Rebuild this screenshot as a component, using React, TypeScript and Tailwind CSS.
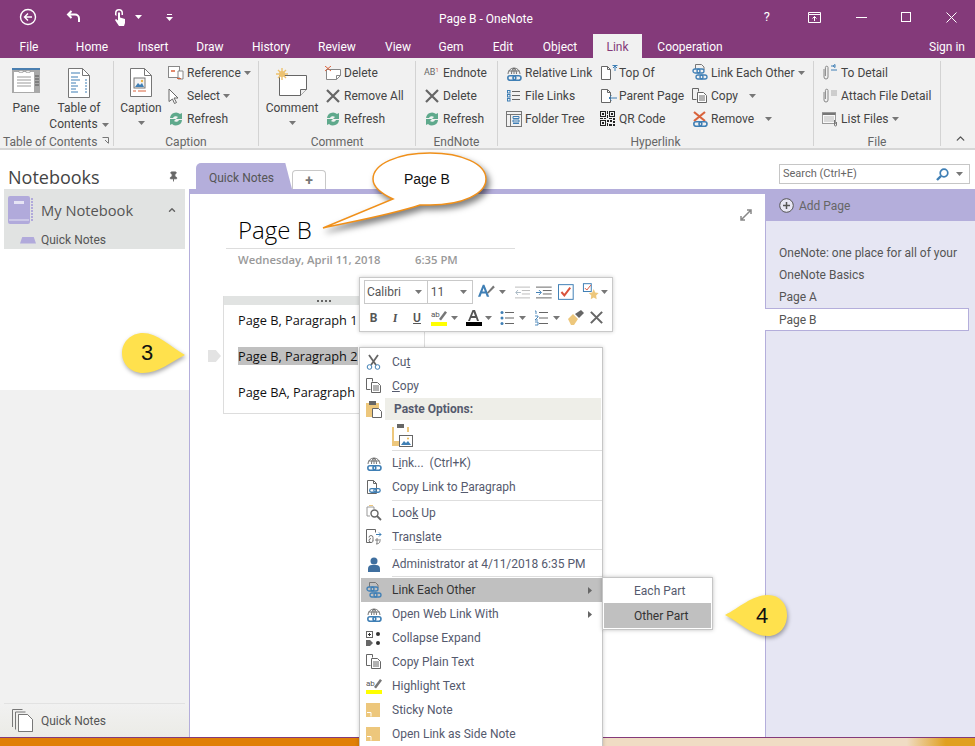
import React from 'react';
import { ChevronUp, Pin } from 'lucide-react';

const purple = '#843a7a';
const openSans = { fontFamily: '"Open Sans", sans-serif' };
const arial = { fontFamily: '"Liberation Sans", sans-serif' };

// ---------- small ribbon icons ----------
const Caret = ({ className = '' }: { className?: string }) => (
  <svg width="7" height="4" viewBox="0 0 7 4" className={className}>
    <path d="M0 0h7L3.500 4z" fill="#777" />
  </svg>
);

const RefreshIcon = () => (
  <svg width="16" height="16" viewBox="0 0 16 16">
    <path d="M2 7a6 6 0 0 1 10-4l2-1v6H8l2-2a3.200 3.200 0 0 0-5 1z" fill="#5fa98c" />
    <path d="M14 9a6 6 0 0 1-10 4l-2 1V8h6l-2 2a3.200 3.200 0 0 0 5-1z" fill="#5fa98c" />
  </svg>
);

const XIcon = ({ size = 16 }: { size?: number }) => (
  <svg width={size} height={size} viewBox="0 0 16 16">
    <path d="M2 2l12 12M14 2L2 14" stroke="#666" strokeWidth="2.200" />
  </svg>
);

const ChainBlue = ({ x = 0, y = 0 }: { x?: number; y?: number }) => (
  <g transform={`translate(${x} ${y})`} fill="none" stroke="#3f7fb5" strokeWidth="1.600">
    <rect x="0.800" y="0.800" width="8" height="4.500" rx="2.200" />
    <rect x="6" y="0.800" width="8" height="4.500" rx="2.200" />
  </g>
);

const GlobeLink = () => (
  <svg width="16" height="16" viewBox="0 0 16 16">
    <g fill="none" stroke="#666" strokeWidth="0.900">
      <path d="M2 9a6 6 0 1 1 12 0" />
      <path d="M8 3v6M5.500 9c0-3 1-5 2.500-6 1.500 1 2.500 3 2.500 6M2.500 6h11" />
    </g>
    <ChainBlue x={1} y={10} />
  </svg>
);

const FileLinks = () => (
  <svg width="16" height="16" viewBox="0 0 16 16" fill="none" stroke="#666">
    <rect x="1.500" y="2.500" width="2.500" height="2.500" stroke="#3f7fb5" />
    <rect x="1.500" y="6.500" width="2.500" height="2.500" stroke="#3f7fb5" />
    <rect x="1.500" y="10.500" width="2.500" height="2.500" stroke="#3f7fb5" />
    <path d="M6 3.500h8M6 7.500h8M6 11.500h8" />
  </svg>
);

const FolderTree = () => (
  <svg width="16" height="16" viewBox="0 0 16 16" fill="none">
    <rect x="0.500" y="0.500" width="15" height="15" stroke="#777" />
    <path d="M0.500 3.500h15M4.500 3.500v12" stroke="#777" />
    <path d="M7 5.500h6v2H7zM7 9h6v2H7zM7 12.500h6" stroke="#3f7fb5" />
  </svg>
);

const PageOutline = ({ children }: { children?: React.ReactNode }) => (
  <svg width="18" height="16" viewBox="0 0 18 16" fill="none">
    <path d="M1.500 1.500h6l3 3v10h-9z" stroke="#666" fill="#fff" />
    <path d="M7.500 1.500v3h3" stroke="#666" />
    {children}
  </svg>
);

const Qr = () => (
  <svg width="15" height="15" viewBox="0 0 15 15" fill="#222">
    <path d="M0 0h6v6H0zM1 1v4h4V1zM2 2h2v2H2zM9 0h6v6H9zM10 1v4h4V1zM11 2h2v2h-2zM0 9h6v6H0zM1 10v4h4v-4zM2 11h2v2H2z" fillRule="evenodd" />
    <path d="M7 0h1v3H7zM7 4h1v3H7zM0 7h3v1H0zM4 7h2v1H4zM9 7h3v1H9zM13 7h2v2h-2zM7 9h2v2H7zM10 9h2v2h-2zM13 10h2v2h-2zM7 12h1v3H7zM9 13h3v2H9zM13 13h2v2h-2z" />
  </svg>
);

const LinkEach = () => (
  <svg width="16" height="17" viewBox="0 0 16 17" fill="none">
    <path d="M3.500 5V.5h6l2.500 2.500v3" stroke="#777" />
    <g stroke="#3f7fb5" strokeWidth="1.300">
      <rect x="1" y="5" width="7" height="4" rx="2" />
      <rect x="5" y="5" width="7" height="4" rx="2" />
      <rect x="4" y="11" width="7" height="4" rx="2" />
      <rect x="8" y="11" width="7" height="4" rx="2" />
    </g>
  </svg>
);

const CopyIcon = () => (
  <svg width="16" height="16" viewBox="0 0 16 16" fill="none" stroke="#666">
    <path d="M.5.500h6v3M.5.500v11h4" />
    <path d="M5.500 4.500h6l3 3v7h-9zM7 8h6M7 10h6M7 12h6" fill="#fff" />
  </svg>
);

const RemoveIcon = () => (
  <svg width="16" height="16" viewBox="0 0 16 16">
    <path d="M2 1l11 9M13 1L2 10" stroke="#d9633c" strokeWidth="2.200" />
    <ChainBlue x={1} y={10} />
  </svg>
);

const Clip = ({ children }: { children?: React.ReactNode }) => (
  <svg width="17" height="17" viewBox="0 0 17 17" fill="none">
    <path d="M2 5v8a2 2 0 0 0 4 0V3.500a1.300 1.300 0 0 0-2.600 0V12" stroke="#888" />
    {children}
  </svg>
);

const ListFiles = () => (
  <svg width="16" height="16" viewBox="0 0 16 16" fill="none">
    <rect x="0.500" y="1.500" width="13" height="11" stroke="#999" fill="#f8f8f8" />
    <path d="M0.500 3h13" stroke="#777" strokeWidth="2" />
    <path d="M2 6h10M2 8h10M2 10h10" stroke="#bbb" />
    <path d="M12.500 9v5a1 1 0 0 0 2 0v-3" stroke="#777" />
  </svg>
);

const Pane = () => (
  <svg width="28" height="26" viewBox="0 0 28 26">
    <rect width="28" height="25" fill="#a9a9a9" />
    <rect width="28" height="2" fill="#4a7fb0" />
    <rect x="2" y="4" width="20" height="20" fill="#fff" />
    <path d="M7 2.500h4v2H7zM14 2.500h4v2h-4z" fill="#eee" stroke="#888" strokeWidth="0.500" />
    <path d="M5 9h14M5 12h14M5 15h14M5 18h14" stroke="#999" />
    <path d="M23 8h4M23 11h4M23 14h4M23 17h4" stroke="#555" />
  </svg>
);

const Toc = () => (
  <svg width="22" height="30" viewBox="0 0 22 30" fill="none">
    <path d="M.5.500h14l7 7v22H.5z" stroke="#777" fill="#fff" />
    <path d="M14.500.500v7h7" stroke="#777" />
    <path d="M3 5h9M3 9h7M3 12h9M3 15h5M3 18h7M3 21h5M3 24h7" stroke="#3f7fb5" strokeWidth="1.200" />
    <path d="M17 12h2M17 15h2M17 18h2M17 21h2M17 24h2" stroke="#3f7fb5" />
  </svg>
);

const CaptionDoc = () => (
  <svg width="22" height="29" viewBox="0 0 22 29" fill="none">
    <path d="M.5.500h14l7 7v21H.5z" stroke="#777" fill="#fff" />
    <path d="M14.500.500v7h7" stroke="#777" />
    <rect x="4" y="10" width="11" height="10" stroke="#777" fill="#f4f4f4" />
    <path d="M5 19l3-4 2 2 2-2 2 4z" fill="#3f7fb5" />
    <circle cx="12" cy="13" r="1.200" fill="#e9b54a" />
    <path d="M3 23h3M8 23h8" stroke="#d9633c" />
  </svg>
);

const Reference = () => (
  <svg width="16" height="14" viewBox="0 0 16 14" fill="none">
    <rect x="0.500" y="0.500" width="11" height="11" stroke="#888" fill="#fff" />
    <path d="M3 5h4" stroke="#d9633c" strokeWidth="1.500" />
    <path d="M10 5h5v8h-5zM9 12h3" stroke="#888" fill="#fff" />
    <path d="M9 12.500h4" stroke="#d9633c" />
  </svg>
);

const Cursor = () => (
  <svg width="12" height="16" viewBox="0 0 12 16" fill="#fff" stroke="#666">
    <path d="M1 1l9 9H6l2.500 4.500-2 1L4.500 11 1 13.500z" />
  </svg>
);

const Comment = () => (
  <svg width="32" height="28" viewBox="0 0 32 28">
    <path d="M3.500 7.500h27v14l-6 6h-21z" fill="#fff" stroke="#666" />
    <path d="M24.500 27.500v-6h6" fill="#eee" stroke="#666" />
    <g stroke="#edc26f" strokeWidth="1.400">
      <path d="M6 0v12M0 6h12M2 2l8 8M10 2l-8 8" />
    </g>
    <circle cx="6" cy="6" r="3" fill="#edc26f" />
  </svg>
);

const DeleteNote = () => (
  <svg width="16" height="14" viewBox="0 0 16 14" fill="none">
    <path d="M1.500 3.500h14v6l-4 4h-10z" stroke="#888" fill="#fff" />
    <path d="M11.500 13.500v-4h4" stroke="#888" />
    <path d="M0 0l6 5M6 0L0 5" stroke="#d9633c" />
  </svg>
);

// ---------- ribbon layout ----------
const RibbonRow = ({ icon, label, caret, caretGap }: { icon: React.ReactNode; label: string; caret?: boolean; caretGap?: boolean }) => (
  <div className="h-[23px] flex items-center whitespace-nowrap">
    <span className="w-[19px] flex justify-start shrink-0">{icon}</span>
    <span>{label}</span>
    {caret && <Caret className={caretGap ? 'ml-[11px]' : 'ml-[3px]'} />}
  </div>
);

const Group = ({ w, label, children, launcher }: { w: number; label: string; children: React.ReactNode; launcher?: boolean }) => (
  <div style={{ width: w }} className="shrink-0 h-[85px] flex flex-col relative border-r border-[#d3d3d3] mt-[3px]">
    <div className="h-[74px] shrink-0 flex">{children}</div>
    <div className={`text-[12px] leading-[14px] text-[#666] whitespace-nowrap ${launcher ? 'pl-[3px]' : 'text-center'}`}>{label}</div>
    {launcher && (
      <svg width="7" height="7" viewBox="0 0 7 7" className="absolute right-[4px] bottom-[2px]" fill="none" stroke="#777">
        <path d="M.5.500h6v6M3 3l3 3" />
      </svg>
    )}
  </div>
);

const BigButton = ({ w, icon, lines, caret }: { w: number; icon: React.ReactNode; lines: React.ReactNode; caret?: boolean }) => (
  <div style={{ width: w }} className="flex flex-col items-center shrink-0">
    <div className="h-[37px] pt-[7px] flex items-start justify-center">{icon}</div>
    <div className="text-center leading-[16px] mt-[2px] whitespace-nowrap">{lines}</div>
    {caret && <Caret className="mt-[5px]" />}
  </div>
);

const RibbonCol = ({ children, className = '' }: { children: React.ReactNode; className?: string }) => (
  <div className={`flex flex-col ${className}`}>{children}</div>
);

// ---------- menu ----------
const MenuRow = ({ icon, label, active, arrow }: { icon?: React.ReactNode; label: React.ReactNode; active?: boolean; arrow?: boolean }) => (
  <div className={`h-[24px] flex items-center whitespace-nowrap pr-[10px] ${active ? 'bg-[#c0c0c0] text-[#333]' : 'text-[#555a6e]'}`}>
    <span className="w-[31px] pl-[5px] flex justify-start shrink-0">{icon}</span>
    <span className="flex-1">{label}</span>
    {arrow && (
      <svg width="4" height="7" viewBox="0 0 4 7">
        <path d="M0 0l4 3.500L0 7z" fill="#666" />
      </svg>
    )}
  </div>
);

const MenuSep = ({ className = '' }: { className?: string }) => <div className={`ml-[31px] h-px bg-[#dedede] ${className}`} />;

const NoteSticky = () => (
  <svg width="15" height="15" viewBox="0 0 15 15">
    <path d="M0 0h14v14H5l-5-0z" fill="#edc77c" />
    <path d="M1 9.500h4v4" fill="none" stroke="#fff" />
  </svg>
);

const Underlined = ({ a, u, b }: { a: string; u: string; b: string }) => (
  <>
    {a}
    <span className="underline">{u}</span>
    {b}
  </>
);

const TitleTab = ({ children, w }: { children: string; w: number }) => (
  <div style={{ width: w }} className="text-center text-white shrink-0">{children}</div>
);

export default function App() {
  return (
    <div className="w-[975px] h-[746px] relative overflow-hidden text-[12px] text-[#444] bg-[#f1f1f1] flex flex-col" style={{ fontFamily: 'Roboto, "Open Sans", sans-serif' }}>
      {/* Title bar */}
      <header className="h-[58px] shrink-0 flex flex-col" style={{ background: purple }}>
        <div className="h-[34px] flex items-center relative text-white">
          <div className="flex items-center pl-[19px]">
            <svg width="18" height="18" viewBox="0 0 18 18" fill="none" stroke="#fff" strokeWidth="1.400">
              <circle cx="9" cy="9" r="7.500" />
              <path d="M13 9H5.500M9 5.500L5.500 9 9 12.500" />
            </svg>
            <svg width="16" height="14" viewBox="0 0 16 14" fill="none" stroke="#fff" strokeWidth="2" className="ml-[29px]">
              <path d="M5.500 1L2 4.500 5.500 8M2 4.500h7a4 4 0 0 1 4 4V12" />
            </svg>
            <svg width="14" height="17" viewBox="0 0 14 17" fill="#fff" className="ml-[32px]">
              <path d="M5 0a4 4 0 0 1 4 4v2h-1.500V4a2.500 2.500 0 0 0-5 0v3L1 6V4a4 4 0 0 1 4-4z" />
              <path d="M4 3.500h2v5l5 1.500v4l-1 3H5L1 11l1-1 2 1.500z" />
            </svg>
            <Caret className="ml-[7px] brightness-[5]" />
            <svg width="7" height="7" viewBox="0 0 7 7" fill="#fff" className="ml-[24px]">
              <path d="M1 0h5v1H1zM0 3h7L3.500 7z" />
            </svg>
          </div>
          <div className="absolute left-[439px] top-[11px] text-[12px] leading-[16px] whitespace-nowrap">Page B - OneNote</div>
          <div className="absolute right-0 top-0 h-[34px] flex items-center">
            <span className="text-[13px] mr-[38px]">?</span>
            <svg width="13" height="11" viewBox="0 0 13 11" fill="none" stroke="#fff" className="mr-[35px]">
              <path d="M.5 2.500v8h12v-10H.5zM.5 2.500h12M6.500 9V4.500M4.500 6.500l2-2 2 2" />
            </svg>
            <span className="w-[11px] h-px bg-white mr-[34px]" />
            <span className="w-[10px] h-[10px] border border-white mr-[35px]" />
            <svg width="11" height="11" viewBox="0 0 11 11" stroke="#fff" className="mr-[18px]">
              <path d="M.5.500l10 10M10.500.500l-10 10" />
            </svg>
          </div>
        </div>
        <div className="h-[24px] flex items-end relative leading-[21px]">
          <TitleTab w={58}>File</TitleTab>
          <TitleTab w={68}>Home</TitleTab>
          <TitleTab w={54}>Insert</TitleTab>
          <TitleTab w={60}>Draw</TitleTab>
          <TitleTab w={62}>History</TitleTab>
          <TitleTab w={70}>Review</TitleTab>
          <TitleTab w={52}>View</TitleTab>
          <TitleTab w={54}>Gem</TitleTab>
          <TitleTab w={50}>Edit</TitleTab>
          <TitleTab w={64}>Object</TitleTab>
          <div className="w-[49px] h-[24px] pt-[3px] text-center bg-[#f1f1f1] text-[#843a7a] shrink-0 ml-[1px]">Link</div>
          <TitleTab w={96}>Cooperation</TitleTab>
          <div className="absolute right-[10px] bottom-0 text-white">Sign in</div>
        </div>
      </header>

      {/* Ribbon */}
      <div className="h-[92px] shrink-0 flex items-start border-b-2 border-[#d6d6d6] relative pl-0">
        <Group w={114} label="Table of Contents" launcher>
          <div className="flex pl-[2px]">
            <BigButton w={48} icon={<Pane />} lines="Pane" />
            <BigButton w={58} icon={<Toc />} lines={<>Table of<br />Contents <Caret className="inline ml-[1px]" /></>} />
          </div>
        </Group>
        <Group w={145} label="Caption">
          <BigButton w={54} icon={<CaptionDoc />} lines="Caption" caret />
          <RibbonCol>
            <RibbonRow icon={<Reference />} label="Reference" caret />
            <RibbonRow icon={<Cursor />} label="Select" caret />
            <RibbonRow icon={<RefreshIcon />} label="Refresh" />
          </RibbonCol>
        </Group>
        <Group w={157} label="Comment">
          <BigButton w={66} icon={<Comment />} lines="Comment" caret />
          <RibbonCol>
            <RibbonRow icon={<DeleteNote />} label="Delete" />
            <RibbonRow icon={<XIcon />} label="Remove All" />
            <RibbonRow icon={<RefreshIcon />} label="Refresh" />
          </RibbonCol>
        </Group>
        <Group w={82} label="EndNote">
          <RibbonCol className="pl-[8px]">
            <RibbonRow icon={<span className="text-[9px] text-[#666] leading-none">AB<sup className="text-[#d9633c] text-[6px]">1</sup></span>} label="Endnote" />
            <RibbonRow icon={<XIcon />} label="Delete" />
            <RibbonRow icon={<RefreshIcon />} label="Refresh" />
          </RibbonCol>
        </Group>
        <Group w={316} label="Hyperlink">
          <RibbonCol className="pl-[8px] w-[102px]">
            <RibbonRow icon={<GlobeLink />} label="Relative Link" />
            <RibbonRow icon={<FileLinks />} label="File Links" />
            <RibbonRow icon={<FolderTree />} label="Folder Tree" />
          </RibbonCol>
          <RibbonCol className="w-[92px]">
            <RibbonRow icon={<PageOutline><path d="M15 6V1M13 3l2-2 2 2M12.500.500h5" stroke="#3f7fb5" /></PageOutline>} label="Top Of" />
            <RibbonRow icon={<PageOutline><path d="M17 10h-8M11.500 7.500L9 10l2.500 2.500" stroke="#3f7fb5" /></PageOutline>} label="Parent Page" />
            <RibbonRow icon={<Qr />} label="QR Code" />
          </RibbonCol>
          <RibbonCol>
            <RibbonRow icon={<LinkEach />} label="Link Each Other" caret />
            <RibbonRow icon={<CopyIcon />} label="Copy" caret caretGap />
            <RibbonRow icon={<RemoveIcon />} label="Remove" caret caretGap />
          </RibbonCol>
        </Group>
        <Group w={127} label="File">
          <RibbonCol className="pl-[8px]">
            <RibbonRow icon={<Clip><path d="M9 2h2M11 2l2-1.500v3zM9 6h6" stroke="#3f7fb5" /></Clip>} label="To Detail" />
            <RibbonRow icon={<Clip><path d="M9 4h6M9 6h6M9 8h6" stroke="#aaa" /></Clip>} label="Attach File Detail" />
            <RibbonRow icon={<ListFiles />} label="List Files" caret />
          </RibbonCol>
        </Group>
        <ChevronUp size={13} strokeWidth={2.500} className="absolute left-[954px] bottom-[3px] text-[#555]" />
      </div>

      {/* Main area */}
      <main className="flex-1 flex min-h-0 bg-white">
        <aside className="w-[189px] shrink-0 flex flex-col bg-[#f1f1f1]">
          <div className="h-[240px] bg-white flex flex-col">
            <div className="h-[39px] flex items-end justify-between pl-[8px] pr-[10px]">
              <span className="text-[18px] leading-[24px] text-[#444]" style={openSans}>Notebooks</span>
              <Pin size={11} fill="#666" className="text-[#666] mb-[7px]" />
            </div>
            <div className="ml-[4px] mr-[4px] h-[60px] bg-[#e1e3e2] relative">
              <div className="flex items-center h-[42px] pl-[4px]">
                <svg width="25" height="29" viewBox="0 0 25 29">
                  <rect width="22" height="28" rx="2" fill="#b1aadb" />
                  <rect x="6" y="5" width="10" height="3" fill="#e6e4f4" />
                  <path d="M1 24h20" stroke="#e6e4f4" />
                  <path d="M24 2v24" stroke="#b1aadb" strokeWidth="2" strokeDasharray="2 1" />
                </svg>
                <span className="ml-[8px] text-[14.700px] text-[#555]" style={openSans}>My Notebook</span>
              </div>
              <ChevronUp size={10} strokeWidth={3.500} className="absolute right-[8px] top-[16px] text-[#666]" />
              <div className="flex items-center pl-[16px] h-[18px]">
                <span className="w-[16px] h-[7px] bg-[#b1aadb] [clip-path:polygon(15%_0,85%_0,100%_100%,0_100%)]" />
                <span className="ml-[5px] text-[#555]">Quick Notes</span>
              </div>
            </div>
          </div>
          <div className="flex-1" />
          <div className="mx-[4px] border-t border-[#e2e2e2]" />
          <div className="h-[33px] flex items-center pl-[12px] bg-gradient-to-b from-[#f1f1f1] to-[#ebebe6]">
            <svg width="21" height="23" viewBox="0 0 21 23" fill="none" stroke="#777">
              <path d="M.5 18V.5h10M3.500 20.500V3h10M6.500 22.500V5.500h9l5 5v12z" />
              <path d="M6.500 22.500V5.500h9l5 5v12z" fill="#fff" />
            </svg>
            <span className="ml-[8px] text-[#555]">Quick Notes</span>
          </div>
        </aside>

        <section className="flex-1 flex flex-col min-w-0">
          {/* section tabs + search */}
          <div className="h-[39px] shrink-0 flex items-end relative pl-[7px]">
            <div className="w-[96px] h-[26px] bg-[#b4aedb] rounded-t-[5px] flex items-center pl-[13px] pt-[3px] text-[#555] [clip-path:polygon(0_0,93%_0,100%_100%,0_100%)]">Quick Notes</div>
            <div className="w-[34px] h-[19px] border border-b-0 border-[#c8c8c8] rounded-t-[4px] flex items-center justify-center text-[#777] font-bold text-[14px] leading-none">+</div>
            <div className="absolute left-[590px] top-[14px] w-[191px] h-[20px] border border-[#c6c6c6] flex items-center pl-[3px] pr-[6px] text-[11px] text-[#666] bg-white">
              <span className="flex-1">Search (Ctrl+E)</span>
              <svg width="13" height="13" viewBox="0 0 13 13" fill="none" stroke="#3f7fb5" strokeWidth="1.700">
                <circle cx="8" cy="5" r="3.800" />
                <path d="M5 8l-4 4" strokeWidth="2.400" />
              </svg>
              <Caret className="ml-[7px]" />
            </div>
          </div>

          <div className="flex-1 flex min-h-0 bg-white">
            <div className="w-[576px] shrink-0 border-l border-[#b4aedb] border-t-[5px] border-t-[#b4aedb] relative">
              <svg width="12" height="12" viewBox="0 0 12 12" fill="none" stroke="#888" strokeWidth="1.500" className="absolute left-[550px] top-[15px]">
                <path d="M1 11l10-10M1 7v4h4M7 1h4v4" />
              </svg>
              <div className="pl-[36px] pt-[19px]" style={openSans}>
                <div className="w-[289px] border-b border-[#ddd] pl-[12px] pb-[2px]">
                  <div className="text-[24px] leading-[33px] font-light text-black">Page B</div>
                </div>
                <div className="pl-[12px] mt-[3px] text-[11.300px] leading-[16px] text-[#999] font-semibold flex whitespace-nowrap">
                  <span className="w-[177px]">Wednesday, April 11, 2018</span>
                  <span>6:35 PM</span>
                </div>
              </div>
              <div className="ml-[33px] mt-[28px] w-[202px] h-[118px] border border-[#ddd] border-t-0 relative">
                <div className="h-[9px] bg-[#e1e3e2] flex items-center justify-center gap-[2px]">
                  {[0, 1, 2, 3].map((i) => (
                    <span key={i} className="w-[2px] h-[2px] bg-[#666]" />
                  ))}
                </div>
                <div className="pl-[14px] text-[12.750px] text-[#111] whitespace-nowrap" style={openSans}>
                  <div className="h-[36px] pt-[5px] leading-[20px]">Page B, Paragraph 1</div>
                  <div className="h-[36px] pt-[5px] leading-[20px]"><span className="bg-[#c0c0c0] inline-block leading-[18px]">Page B, Paragraph 2</span></div>
                  <div className="h-[36px] pt-[5px] leading-[20px]">Page BA, Paragraph 1</div>
                </div>
                <div className="absolute left-[-16px] top-[54px] w-[13px] h-[12px] bg-[#e3e3e3] [clip-path:polygon(0_0,60%_0,100%_50%,60%_100%,0_100%)]" />
              </div>
            </div>
            <div className="flex-1 bg-[#e6e6f3] border-l border-[#b4aedb] text-[#555]">
              <div className="h-[32px] bg-[#b4aedb] flex items-center pl-[13px] pt-[1px]">
                <svg width="15" height="15" viewBox="0 0 15 15" fill="none" stroke="#555">
                  <circle cx="7.500" cy="7.500" r="6.800" fill="#e8e6f4" />
                  <path d="M7.500 4v7M4 7.500h7" strokeWidth="1.500" />
                </svg>
                <span className="ml-[5px] text-[#666]">Add Page</span>
              </div>
              <div className="pt-[21px]">
                <div className="h-[22px] pl-[13px] flex items-center whitespace-nowrap overflow-hidden">OneNote: one place for all of your</div>
                <div className="h-[22px] pl-[13px] flex items-center">OneNote Basics</div>
                <div className="h-[22px] pl-[13px] flex items-center">Page A</div>
                <div className="h-[23px] pl-[14px] ml-[-1px] w-[204px] flex items-center bg-white border border-[#b4aedb] border-l-0 border-r">Page B</div>
              </div>
            </div>
          </div>
        </section>
      </main>

      {/* bottom of the window and the desktop behind it */}
      <div className="h-[9px] shrink-0 border-t border-[#843a7a] bg-[linear-gradient(90deg,#e07f06_0%,#e07f06_38%,#f0dcc4_61%,#f0dcc4_93%,#e0a020_97%)]" />

      {/* Callout over page title */}
      <svg width="200" height="90" viewBox="0 0 200 90" className="absolute left-[310px] top-[150px] drop-shadow-[3px_4px_3px_rgba(0,0,0,0.5)]">
        <path d="M13 78L83 49C70 43 63 36 63 29 63 14 88 3 120 3 152 3 176 14 176 29 176 44 152 55 120 55 115 55 112 55 110 55 80 65 40 72 13 78Z" fill="#fff" stroke="#f0901a" strokeWidth="1.500" />
      </svg>
      <div className="absolute left-[404px] top-[171px] text-[14px] leading-[17px] text-[#111]" style={arial}>Page B</div>

      {/* Callout 3 */}
      <svg width="74" height="50" viewBox="0 0 74 50" className="absolute left-[120px] top-[332px] drop-shadow-[1px_2px_2px_rgba(0,0,0,0.35)]">
        <path d="M23 1c14 0 28 14 42 22C51 30 38 41 23 41 11 41 2 32 2 21S11 1 23 1z" fill="#ffe14d" />
      </svg>
      <div className="absolute left-[141px] top-[340px] text-[22px] leading-[26px] text-[#111]" style={arial}>3</div>

      {/* Callout 4 */}
      <svg width="74" height="50" viewBox="0 0 74 50" className="absolute left-[720px] top-[592px] drop-shadow-[1px_2px_2px_rgba(0,0,0,0.35)]">
        <path d="M48 3C32 3 19 16 5 23c14 7 27 21 43 21 12 0 19-10 19-21S60 3 48 3z" fill="#ffe14d" />
      </svg>
      <div className="absolute left-[756px] top-[603px] text-[22px] leading-[26px] text-[#111]" style={arial}>4</div>

      {/* Floating mini toolbar */}
      <div className="absolute left-[359px] top-[277px] w-[254px] h-[55px] bg-white border border-[#c9c9c9] shadow-[0_0_4px_rgba(0,0,0,0.2)] px-[4px] pt-[2px]">
        <div className="flex items-center h-[24px]">
          <div className="w-[65px] h-[24px] border border-[#c9c9c9] flex items-center justify-between pl-[2px] pr-[5px] text-[#555]">Calibri<Caret /></div>
          <div className="w-[46px] h-[24px] border border-[#c9c9c9] border-l-0 flex items-center justify-between pl-[3px] pr-[5px] text-[#555]">11<Caret /></div>
          <svg width="18" height="20" viewBox="0 0 22 20" className="ml-[5px]">
            <path d="M6 1L0 16h3l1.500-4h5L11 16h3L8 1zM5.500 9.500L7 5l1.500 4.500z" fill="#3f7fb5" fillRule="evenodd" />
            <path d="M11 11l8-9 2 2-8 8z" fill="#777" />
          </svg>
          <Caret className="ml-[3px]" />
          <svg width="16" height="13" viewBox="0 0 16 13" fill="none" stroke="#bbb" className="ml-[9px]">
            <path d="M0 1h16M7 4.500h9M7 8h9M0 12h16" />
            <path d="M6 6.500H1M3 4L.8 6.500 3 9" stroke="#aab8c4" />
          </svg>
          <svg width="16" height="13" viewBox="0 0 16 13" fill="none" stroke="#666" className="ml-[6px]">
            <path d="M0 1h16M7 4.500h9M7 8h9M0 12h16" />
            <path d="M0 6.500h5M3 4l2.500 2.500L3 9" stroke="#3f7fb5" />
          </svg>
          <svg width="16" height="16" viewBox="0 0 16 16" fill="none" className="ml-[6px]">
            <rect x="0.500" y="0.500" width="15" height="15" stroke="#3f7fb5" />
            <path d="M3.500 8l3 3.500 6-8" stroke="#d9533c" strokeWidth="2" />
          </svg>
          <svg width="20" height="18" viewBox="0 0 20 18" className="ml-[6px]">
            <rect x="3.500" y="0.500" width="8" height="8" fill="none" stroke="#3f7fb5" />
            <path d="M5 5l2 2 4-5" stroke="#d9533c" fill="none" />
            <path d="M14 6l1.500 3.500 3.500.5-2.500 2.500.5 4-3-2-3 2 .5-4L9 10l3.500-.5z" fill="#edc77c" />
          </svg>
          <Caret className="ml-[2px]" />
        </div>
        <div className="flex items-center h-[25px] mt-[1px] text-[#555]">
          <span className="w-[19px] text-center font-bold">B</span>
          <span className="w-[24px] text-center italic font-serif font-bold">I</span>
          <span className="w-[18px] text-center underline ml-px font-semibold">U</span>
          <svg width="17" height="17" viewBox="0 0 17 17" className="ml-[5px]">
            <rect y="13" width="16" height="4" fill="#ffff00" />
            <path d="M8 10l6-8 2 1.500-6 8z" fill="#777" />
            <text x="0" y="8" fontSize="8" fill="#555">ab</text>
          </svg>
          <Caret className="ml-[3px]" />
          <svg width="16" height="17" viewBox="0 0 16 17" className="ml-[8px]">
            <rect y="13" width="16" height="4" fill="#000" />
            <path d="M6.500 1L2 12h2l1-3h5l1 3h2L9 1zM6 7l1.500-4L9 7z" fill="#555" fillRule="evenodd" />
          </svg>
          <Caret className="ml-[3px]" />
          <svg width="14" height="16" viewBox="0 0 14 16" className="ml-[8px]">
            <g fill="#3f7fb5"><circle cx="2" cy="2.500" r="1.500" /><circle cx="2" cy="8" r="1.500" /><circle cx="2" cy="13.500" r="1.500" /></g>
            <path d="M5 2.500h9M5 8h9M5 13.500h9" stroke="#666" />
          </svg>
          <Caret className="ml-[5px]" />
          <svg width="14" height="16" viewBox="0 0 14 16" className="ml-[8px]">
            <path d="M1 1h1v3M1 6h3v1L1 10h3M1 12h3v3H1" fill="none" stroke="#3f7fb5" strokeWidth="0.900" />
            <path d="M5 2.500h9M5 8h9M5 13.500h9" stroke="#666" />
          </svg>
          <Caret className="ml-[5px]" />
          <svg width="17" height="15" viewBox="0 0 17 15" className="ml-[8px]">
            <path d="M0 9l5-5 5 5-4 6H3z" fill="#edc77c" />
            <path d="M7 4l6-4 3 3-5 5z" fill="#666" />
          </svg>
          <span className="ml-[4px]"><XIcon size={15} /></span>
        </div>
      </div>

      {/* Context menu */}
      <div className="absolute left-[359px] top-[347px] w-[244px] h-[410px] bg-white border border-[#c6c6c6] shadow-[0_0_4px_rgba(0,0,0,0.2)] pt-[2px] pl-px">
        <MenuRow icon={
          <svg width="15" height="16" viewBox="0 0 15 16" fill="none">
            <path d="M3 1l7 10M12 1L5 11" stroke="#666" strokeWidth="1.800" />
            <circle cx="3.500" cy="13" r="2.300" stroke="#3f7fb5" />
            <circle cx="11.500" cy="13" r="2.300" stroke="#3f7fb5" />
          </svg>
        } label={<Underlined a="Cu" u="t" b="" />} />
        <MenuRow icon={<CopyIcon />} label={<Underlined a="" u="C" b="opy" />} />
        <div className="h-[22px] flex items-center">
          <span className="w-[24px] pl-[5px] shrink-0">
            <svg width="16" height="17" viewBox="0 0 16 17">
              <rect y="2" width="13" height="14" fill="#edc77c" />
              <rect x="3" y="0" width="7" height="4" fill="#666" />
              <path d="M6.500 7.500h6l3 3v6h-9z" fill="#fff" stroke="#666" />
            </svg>
          </span>
          <span className="flex-1 h-[22px] bg-[#eeeee8] flex items-center pl-[9px] font-bold text-[#555a6e] text-[12px] mr-px">Paste Options:</span>
        </div>
        <div className="h-[30px] pl-[30px] pt-[4px]">
          <svg width="22" height="23" viewBox="0 0 22 23">
            <path d="M1 3h17v5H8v14H1z" fill="#edc77c" />
            <rect x="3" y="3" width="13" height="14" fill="#fff" />
            <rect x="6" y="0" width="7" height="4" fill="#666" />
            <rect x="8.500" y="11.500" width="13" height="11" fill="#fff" stroke="#666" />
            <path d="M10 21l3-4 2 2 2-2 3 4z" fill="#3f7fb5" />
            <circle cx="17" cy="14.500" r="1" fill="#e9b54a" />
          </svg>
        </div>
        <MenuSep />
        <MenuRow icon={<GlobeLink />} label={<><Underlined a="L" u="i" b="nk..." />&nbsp; (Ctrl+K)</>} />
        <MenuRow icon={
          <PageOutline><g transform="translate(3 9) scale(0.800)"><ChainBlue /></g></PageOutline>
        } label={<Underlined a="Copy Link to " u="P" b="aragraph" />} />
        <MenuSep className="mt-px" />
        <MenuRow icon={
          <svg width="16" height="16" viewBox="0 0 16 16" fill="none">
            <path d="M1 2h7v2M1 2v9h3" stroke="#999" />
            <circle cx="8.500" cy="8.500" r="3.500" stroke="#666" strokeWidth="1.400" />
            <path d="M11 11l4 4" stroke="#666" strokeWidth="1.800" />
            <path d="M3 0h4" stroke="#edc77c" strokeWidth="2" />
          </svg>
        } label={<Underlined a="Loo" u="k" b=" Up" />} />
        <MenuRow icon={
          <svg width="16" height="16" viewBox="0 0 16 16" fill="none" stroke="#666">
            <path d="M.5.500h9v3M.5.500v13h5" />
            <path d="M3 8.500a2 2 0 1 1 4 0v3M7 11a2 2 0 1 1-2-1.500" strokeWidth="0.900" />
            <path d="M10 5.500h5M13 3.500l2 2-2 2" stroke="#3f7fb5" />
            <path d="M9 11h6M11 9v6M14 12c0 2-2 3-4 3" strokeWidth="0.800" />
          </svg>
        } label={<Underlined a="Tran" u="s" b="late" />} />
        <MenuSep className="mb-[2px]" />
        <MenuRow icon={
          <svg width="14" height="15" viewBox="0 0 14 15" fill="#3f6f9f" className="ml-[1px]">
            <circle cx="7" cy="4" r="3.500" />
            <path d="M1 15v-3a4 4 0 0 1 4-4h4a4 4 0 0 1 4 4v3z" />
          </svg>
        } label="Administrator at 4/11/2018 6:35 PM" />
        <MenuSep className="mb-px" />
        <MenuRow active arrow icon={<LinkEach />} label="Link Each Other" />
        <MenuRow arrow icon={<GlobeLink />} label="Open Web Link With" />
        <MenuRow icon={
          <svg width="15" height="15" viewBox="0 0 15 15">
            <rect x="0.500" y="0.500" width="6" height="6" fill="none" stroke="#666" />
            <path d="M2 3.500h3M3.500 2v3" stroke="#333" />
            <path d="M0 9h4l3 3-3 3H0z" fill="#666" />
            <circle cx="12" cy="3" r="2" fill="#333" />
            <circle cx="12" cy="12" r="2" fill="#333" />
          </svg>
        } label="Collapse Expand" />
        <MenuRow icon={<CopyIcon />} label="Copy Plain Text" />
        <MenuRow icon={
          <svg width="16" height="16" viewBox="0 0 16 16">
            <rect y="12" width="16" height="4" fill="#ffff00" />
            <path d="M8 9l6-8 2 1.500-6 8z" fill="#777" />
            <text x="0" y="8" fontSize="8" fill="#555">ab</text>
          </svg>
        } label="Highlight Text" />
        <MenuRow icon={<NoteSticky />} label="Sticky Note" />
        <MenuRow icon={<NoteSticky />} label="Open Link as Side Note" />
      </div>

      {/* Submenu */}
      <div className="absolute left-[602px] top-[577px] w-[111px] h-[53px] bg-white border border-[#c6c6c6] shadow-[0_0_4px_rgba(0,0,0,0.25)] p-px">
        <div className="h-[24px] flex items-center pl-[30px] text-[#555a6e]">Each Part</div>
        <div className="h-[25px] flex items-center pl-[30px] bg-[#c0c0c0] text-[#333]">Other Part</div>
      </div>
    </div>
  );
}
